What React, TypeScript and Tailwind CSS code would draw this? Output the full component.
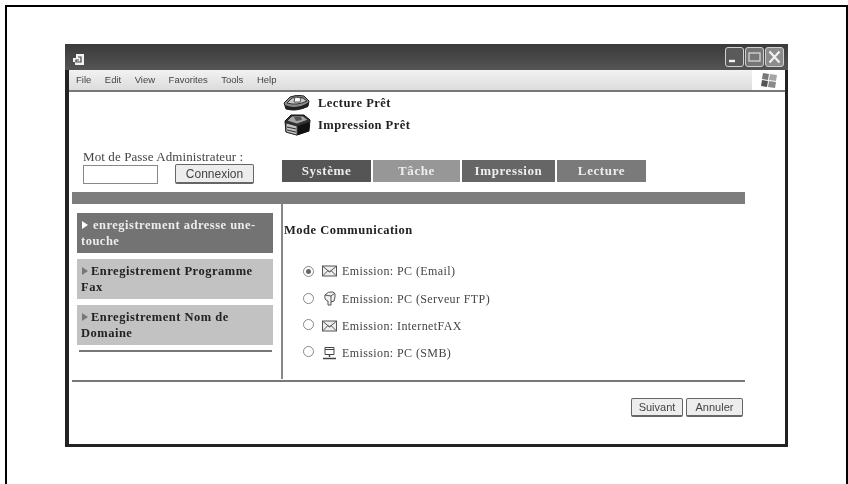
const serif = "font-['Liberation_Serif',serif]";

const TABS = [
  { label: "Système", width: "w-[89px]", bg: "bg-[#555555]" },
  { label: "Tâche", width: "w-[87px]", bg: "bg-[#979797]" },
  { label: "Impression", width: "w-[93px]", bg: "bg-[#666666]" },
  { label: "Lecture", width: "w-[89px]", bg: "bg-[#7a7a7a]" },
];

const MENU = ["File", "Edit", "View", "Favorites", "Tools", "Help"];

const ScannerIcon = () => (
  <svg width="27" height="17" viewBox="0 0 27 17">
    <path d="M1 8 L7 2 Q14 -1 21 1 L26 6 L25 11 Q14 17 3 14 Z" fill="#8a8a8a" stroke="#222" strokeWidth="1" />
    <path d="M4 8 L9 3 Q15 1 20 3 L24 6 Q14 11 4 8 Z" fill="#c8c8c8" stroke="#333" strokeWidth="1" />
    <path d="M12 2 L18 3 L17 7 L11 7 Z" fill="#fff" stroke="#444" strokeWidth="0.9" />
    <path d="M2 10 Q14 15 26 7 L25 12 Q14 17 3 14 Z" fill="#222" />
  </svg>
);

const PrinterIcon = () => (
  <svg width="29" height="22" viewBox="0 0 29 22">
    <path d="M2 7 L8 1 L21 1 L27 6 L26 17 L14 21 L3 18 Z" fill="#333" stroke="#111" strokeWidth="1" />
    <path d="M4 7 L9 2 L20 2 L25 6 L14 10 Z" fill="#a5a5a5" stroke="#222" strokeWidth="0.8" />
    <path d="M11 3 L18 3 L19 6 L13 7 Z" fill="#555" />
    <path d="M3 9 L14 12 L14 21 L3 18 Z" fill="#c4c4c4" stroke="#222" strokeWidth="0.8" />
    <path d="M4 13 L13 15 M4 16 L13 18" stroke="#333" strokeWidth="1.2" />
    <path d="M15 12 L26 8 L26 17 L15 21 Z" fill="#111" />
  </svg>
);

const MailIcon = () => (
  <svg width="15" height="12" viewBox="0 0 15 12" fill="none" stroke="#555" strokeWidth="1">
    <rect x="0.5" y="1" width="14" height="10" fill="#eee" />
    <path d="M1 10.5 L6 5.5 L7.5 7 L9 5.5 L14 10.5 M1 1.5 L7.5 7 L14 1.5" />
  </svg>
);

const ServerIcon = () => (
  <svg width="15" height="15" viewBox="0 0 15 15" fill="none" stroke="#555" strokeWidth="1">
    <path d="M3 4 Q6 0 11 1 Q14 2 13 6 L12 10 L9 11 L9 14 L6 14 L6 10 Q2 9 3 4 Z" fill="#f2f2f2" />
    <path d="M3 4 L9 5 L9 11 M9 5 L13 2" />
  </svg>
);

const PcIcon = () => (
  <svg width="15" height="14" viewBox="0 0 15 14" fill="none" stroke="#444" strokeWidth="1">
    <path d="M3 1.5 H12 V8.5 H3 Z" fill="#fff" />
    <path d="M3 3.5 H12" />
    <path d="M7.5 9 V11 M1 12.5 H14" strokeWidth="1.4" />
  </svg>
);

const WinLogo = () => (
  <svg width="19" height="17" viewBox="0 0 19 17">
    <path d="M4 1 L10 2 L9 8 L3 7 Z" fill="#777" />
    <path d="M11 2 L18 3 L17 9 L10 8 Z" fill="#a5a5a5" />
    <path d="M3 8 L9 9 L8 15 L2 14 Z" fill="#555" />
    <path d="M10 9 L17 10 L16 16 L9 15 Z" fill="#8a8a8a" />
  </svg>
);

const WinButton = ({ kind }: { kind: "min" | "max" | "close" }) => (
  <span
    className={`flex h-[20px] w-[19px] items-center justify-center rounded-[3px] border border-[#d0d0d0] ${
      kind === "min" ? "bg-[#5a5a5a]" : kind === "max" ? "bg-[#767676]" : "bg-[#8c8c8c]"
    }`}
  >
    <svg width="15" height="14" viewBox="0 0 15 14" fill="none" stroke="#f2f2f2">
      {kind === "min" && <path d="M2 11 H8" strokeWidth="2.4" />}
      {kind === "max" && <rect x="2" y="3" width="11" height="8" stroke="#cfcfcf" strokeWidth="1.4" />}
      {kind === "close" && <path d="M2.5 1.5 L12.5 12.5 M12.5 1.5 L2.5 12.5" strokeWidth="2.2" />}
    </svg>
  </span>
);

const Radio = ({ checked, raised }: { checked?: boolean; raised?: boolean }) => (
  <span
    className={`flex h-[11px] w-[11px] shrink-0 items-center justify-center rounded-full border border-[#888] bg-white ${
      raised ? "-mt-[3px]" : ""
    }`}
  >
    {checked && <span className="h-[5px] w-[5px] rounded-full bg-[#666]" />}
  </span>
);

const SideItem = ({ first, rest, active }: { first: string; rest: string; active?: boolean }) => (
  <div
    className={`h-[40px] pl-[4px] pt-[4px] text-[12.5px] font-bold leading-[16px] tracking-[0.5px] ${
      active ? "bg-[#737373] text-[#ececec]" : "bg-[#c2c2c2] text-[#222]"
    }`}
  >
    <svg
      width="6"
      height="8"
      viewBox="0 0 6 8"
      className={`ml-px inline-block align-baseline ${active ? "mr-[5px] fill-white" : "mr-[3px] fill-[#777]"}`}
    >
      <path d="M0 0 L6 4 L0 8 Z" />
    </svg>
    {first}
    <br />
    {rest}
  </div>
);

const OPTIONS = [
  { label: "Emission: PC (Email)", icon: <MailIcon />, h: "h-[28px]", raised: false },
  { label: "Emission: PC (Serveur FTP)", icon: <ServerIcon />, h: "h-[27px]", raised: false },
  { label: "Emission: InternetFAX", icon: <MailIcon />, h: "h-[27px]", raised: true },
  { label: "Emission: PC (SMB)", icon: <PcIcon />, h: "h-[28px]", raised: true },
];

const GrayButton = ({ label, width }: { label: string; width: string }) => (
  <button
    type="button"
    className={`h-[19px] ${width} rounded-[2px] border border-[#666] border-b-2 bg-[#ededed] font-['Liberation_Sans',sans-serif] text-[11px] leading-none text-[#444]`}
  >
    {label}
  </button>
);

export default function App() {
  return (
    <div className={`h-[484px] w-[848px] overflow-hidden bg-white pl-[5px] pt-[5px] blur-[0.6px] ${serif}`}>
      <div className="h-[479px] w-[843px] border-x-2 border-t-2 border-black pl-[58px] pt-[37px]">
        <div className="flex h-[403px] w-[723px] flex-col border-b-[3px] border-l-[4px] border-r-[3px] border-[#222] bg-white">
          {/* title bar */}
          <div className="-ml-[4px] -mr-[3px] flex h-[26px] shrink-0 items-center justify-between bg-gradient-to-b from-[#3a3a3a] to-[#555555] pl-[7px] pr-[4px]">
            <svg width="13" height="12" viewBox="0 0 13 12" className="mt-[6px]">
              <path d="M4 0 H12 V11 H3 V8 H1 V4 H4 Z" fill="#f2f2f2" />
              <path d="M6 3 H9 V8 H4 V6 H7" fill="none" stroke="#444" strokeWidth="1.2" />
            </svg>
            <div className="flex gap-px">
              <WinButton kind="min" />
              <WinButton kind="max" />
              <WinButton kind="close" />
            </div>
          </div>

          {/* menu bar */}
          <div className="flex h-[22px] shrink-0 items-center justify-between border-b-2 border-[#777] bg-gradient-to-b from-[#f2f2f2] to-[#dcdcdc] font-['Liberation_Sans',sans-serif] text-[9.5px] text-[#444]">
            <div className="flex gap-[13.5px] pl-[7px]">
              {MENU.map((m) => (
                <span key={m}>{m}</span>
              ))}
            </div>
            <span className="flex h-full w-[33px] items-center justify-center bg-white">
              <WinLogo />
            </span>
          </div>

          {/* header */}
          <div className="flex h-[100px] shrink-0 pl-[3px]">
            <div className="flex w-[210px] shrink-0 flex-col justify-end pb-[8px] pl-[11px]">
              <div className="text-[13px] leading-[15px] tracking-[0.1px] text-[#444]">Mot de Passe Administrateur :</div>
              <div className="flex items-center">
                <div className="h-[19px] w-[75px] border border-[#888] bg-white" />
                <button
                  type="button"
                  className="ml-[17px] h-[20px] w-[79px] rounded-[2px] border border-[#666] border-b-2 bg-[#ededed] font-['Liberation_Sans',sans-serif] text-[12px] leading-none text-[#444]"
                >
                  Connexion
                </button>
              </div>
            </div>
            <div className="flex flex-col pt-[3px]">
              <div className="flex items-center gap-[8px] text-[12.5px] font-bold leading-none tracking-[0.45px] text-[#222]">
                <span className="ml-px flex">
                  <ScannerIcon />
                </span>
                <span>Lecture Prêt</span>
              </div>
              <div className="mt-[2px] flex items-center gap-[6px] text-[12.5px] font-bold leading-none tracking-[0.45px] text-[#222]">
                <span className="ml-px flex">
                  <PrinterIcon />
                </span>
                <span>Impression Prêt</span>
              </div>
              <div className="mt-[24px] flex gap-[2px]">
                {TABS.map((t) => (
                  <div
                    key={t.label}
                    className={`flex h-[22px] ${t.width} items-center justify-center ${t.bg} text-[13px] font-bold tracking-[0.6px] text-[#eeeeee]`}
                  >
                    {t.label}
                  </div>
                ))}
              </div>
            </div>
          </div>

          <div className="ml-[3px] h-[12px] w-[673px] shrink-0 bg-[#7d7d7d]" />

          {/* body */}
          <div className="ml-[3px] flex h-[175px] w-[673px] shrink-0">
            <div className="w-[209px] shrink-0 pl-[5px] pr-[8px] pt-[9px]">
              <div className="flex flex-col gap-[6px]">
                <SideItem first="enregistrement adresse une-" rest="touche" active />
                <SideItem first="Enregistrement Programme" rest="Fax" />
                <SideItem first="Enregistrement Nom de" rest="Domaine" />
              </div>
              <div className="ml-[2px] mt-[5px] h-[2px] w-[193px] bg-[#777]" />
            </div>
            <div className="w-[2px] shrink-0 bg-[#888]" />
            <div className="pl-[1px] pt-[18px]">
              <div className="text-[12.5px] font-bold leading-[16px] tracking-[0.5px] text-[#222]">Mode Communication</div>
              <div className="mt-[19px] flex flex-col pl-[19px]">
                {OPTIONS.map((o) => (
                  <div key={o.label} className={`flex ${o.h} items-center text-[12px] text-[#444]`}>
                    <Radio checked={o.label === "Emission: PC (Email)"} raised={o.raised} />
                    <span className="ml-[8px] flex w-[15px] justify-center">{o.icon}</span>
                    <span className="ml-[5px] tracking-[0.4px]">{o.label}</span>
                  </div>
                ))}
              </div>
            </div>
          </div>

          {/* footer */}
          <div className="ml-[3px] mt-[1px] flex w-[673px] justify-end gap-[3px] border-t-2 border-[#777] pr-[2px] pt-[16px]">
            <GrayButton label="Suivant" width="w-[52px]" />
            <GrayButton label="Annuler" width="w-[57px]" />
          </div>
        </div>
      </div>
    </div>
  );
}
